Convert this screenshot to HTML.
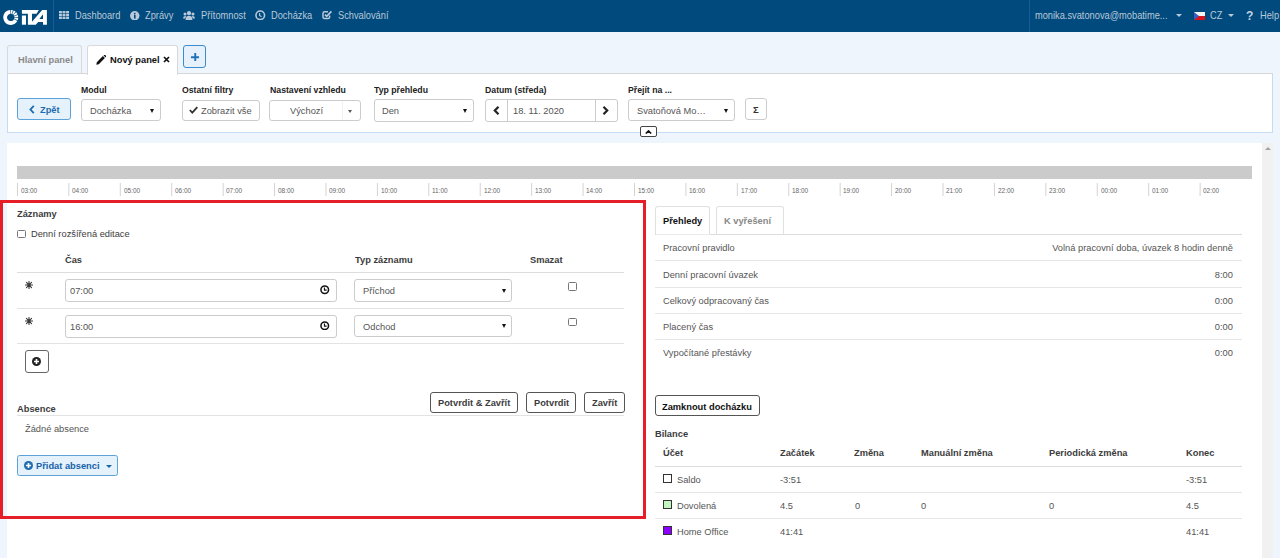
<!DOCTYPE html>
<html><head><meta charset="utf-8">
<style>
*{box-sizing:border-box;margin:0;padding:0}
html,body{width:1280px;height:558px;overflow:hidden;background:#eef5fc;font-family:"Liberation Sans",sans-serif;color:#555}
.a{position:absolute}
.t{position:absolute;line-height:1;white-space:nowrap;transform:scaleX(0.962);transform-origin:0 0}
.r{transform-origin:100% 0}
.b{font-weight:bold}
#nav{position:absolute;left:0;top:0;width:1280px;height:32px;background:#004a7d}
.t.nt{color:#b9c9da;font-size:10.3px;transform:scaleX(.9)}
.box{position:absolute;border:1px solid #ccc;border-radius:3px;background:#fff}
.lbl{color:#222;font-size:9.05px;font-weight:bold}
.ct{font-size:9.67px;color:#555}
.caret{position:absolute;width:0;height:0;border-left:2.5px solid transparent;border-right:2.5px solid transparent;border-top:4px solid #111}
.tick{position:absolute;top:183px;width:1px;height:13px;background:#d0d0d0}
.tl{position:absolute;top:187.1px;transform:scaleX(0.92);transform-origin:0 0;font-size:7px;color:#666;line-height:1}
.hl{position:absolute;height:1px;background:#ddd}
.btn{position:absolute;border:1px solid #555;border-radius:3px;background:#fff}
</style></head><body>

<!-- NAVBAR -->
<div id="nav">
  <svg class="a" style="left:0;top:0" width="60" height="32" viewBox="0 0 60 32"><g fill="#fff">
<path d="M9.84 9.96 A7.5 7.5 0 1 0 17.37 20.92 L14.02 19.14 A3.7 3.7 0 1 1 10.30 13.73Z M12.92 10.22 A7.5 7.5 0 0 0 10.62 9.90 L10.69 13.70 A3.7 3.7 0 0 1 11.82 13.86Z M15.63 11.71 A7.5 7.5 0 0 0 13.66 10.49 L12.18 13.99 A3.7 3.7 0 0 1 13.16 14.59Z M17.51 14.16 A7.5 7.5 0 0 0 16.20 12.25 L13.44 14.86 A3.7 3.7 0 0 1 14.09 15.80Z M18.25 17.16 A7.5 7.5 0 0 0 17.82 14.88 L14.24 16.16 A3.7 3.7 0 0 1 14.45 17.28Z M17.70 20.21 A7.5 7.5 0 0 0 18.23 17.95 L14.44 17.67 A3.7 3.7 0 0 1 14.18 18.79Z"/>
<path fill-rule="evenodd" d="M21.9 10 L38.8 10 L36.6 13.8 L32 13.8 L32 21.7 L42.2 10 L46.9 10 L46.9 24.7 L43 24.7 L43 22 L38.15 22 L35.8 24.7 L27.9 24.7 L27.9 13.8 L21.9 13.8Z M39.4 19 L43 14.15 L43 19Z"/>
<rect x="21.9" y="15.5" width="4.1" height="9.2"/>
</g></svg>
  <div class="a" style="left:53px;top:0;width:1px;height:32px;background:#1c5a9a"></div>
  <!-- grid icon -->
  <svg class="a" style="left:58.9px;top:10.8px" width="10" height="8.4" viewBox="0 0 10 8.4"><g fill="#b9c9da"><rect x="0.00" y="0.00" width="2.9" height="2.4"/><rect x="3.55" y="0.00" width="2.9" height="2.4"/><rect x="7.10" y="0.00" width="2.9" height="2.4"/><rect x="0.00" y="3.00" width="2.9" height="2.4"/><rect x="3.55" y="3.00" width="2.9" height="2.4"/><rect x="7.10" y="3.00" width="2.9" height="2.4"/><rect x="0.00" y="6.00" width="2.9" height="2.4"/><rect x="3.55" y="6.00" width="2.9" height="2.4"/><rect x="7.10" y="6.00" width="2.9" height="2.4"/></g></svg>
  <div class="t nt" style="left:74.5px;top:10.55px">Dashboard</div>
  <svg class="a" style="left:130px;top:10.5px" width="9.5" height="9.5" viewBox="0 0 10 10"><circle cx="5" cy="5" r="5" fill="#b9c9da"/><rect x="4.2" y="4.2" width="1.7" height="3.8" fill="#004a7d"/><circle cx="5" cy="2.7" r="0.95" fill="#004a7d"/></svg>
  <div class="t nt" style="left:145px;top:10.55px">Zprávy</div>
  <svg class="a" style="left:183px;top:11px" width="12" height="9" viewBox="0 0 12 9"><g fill="#b9c9da">
    <circle cx="6" cy="2.2" r="2.1"/><path d="M2.6 9 Q2.6 4.8 6 4.8 Q9.4 4.8 9.4 9Z"/>
    <circle cx="2" cy="3" r="1.5"/><path d="M0 7.5 Q0 5 2 5 Q3 5 3.3 5.6 Q2.3 6.5 2.2 7.5Z"/>
    <circle cx="10" cy="3" r="1.5"/><path d="M12 7.5 Q12 5 10 5 Q9 5 8.7 5.6 Q9.7 6.5 9.8 7.5Z"/>
  </g></svg>
  <div class="t nt" style="left:200.5px;top:10.55px">Přítomnost</div>
  <svg class="a" style="left:255px;top:9.5px" width="10.5" height="10.5" viewBox="0 0 10 10"><circle cx="5" cy="5" r="4.1" fill="none" stroke="#b9c9da" stroke-width="1.5"/><path d="M4.4 2.8 L4.4 5.2 L6.2 6.4" fill="none" stroke="#b9c9da" stroke-width="1.1"/></svg>
  <div class="t nt" style="left:271px;top:10.55px">Docházka</div>
  <svg class="a" style="left:321.5px;top:10px" width="10.5" height="10" viewBox="0 0 10.5 10"><path d="M7.6 5.6 L7.6 7 Q7.6 8.6 6 8.6 L2.6 8.6 Q1 8.6 1 7 L1 3.4 Q1 1.8 2.6 1.8 L6 1.8" fill="none" stroke="#b9c9da" stroke-width="1.5"/><path d="M3 4.6 L4.7 6.3 L9.4 1.4" fill="none" stroke="#b9c9da" stroke-width="1.7"/></svg>
  <div class="t nt" style="left:337.5px;top:10.55px">Schvalování</div>

  <div class="a" style="left:1029px;top:0;width:1px;height:32px;background:#1c5a9a"></div>
  <div class="t nt" style="left:1035px;top:10.55px">monika.svatonova@mobatime...</div>
  <div class="caret" style="left:1175.5px;top:14px;border-left-width:3px;border-right-width:3px;border-top:3.5px solid #b9c9da"></div>
  <svg class="a" style="left:1194px;top:12px" width="11" height="8" viewBox="0 0 11 8"><rect width="11" height="4" fill="#f4f4f4"/><rect y="4" width="11" height="4" fill="#d7141a"/><path d="M0 0 L5 4 L0 8Z" fill="#3b5fc0"/></svg>
  <div class="t nt" style="left:1210px;top:10.55px">CZ</div>
  <div class="caret" style="left:1228px;top:14px;border-left-width:3px;border-right-width:3px;border-top:3.5px solid #b9c9da"></div>
  <div class="t b" style="left:1246px;top:9.5px;font-size:12.5px;color:#c4d2e0">?</div>
  <div class="t nt" style="left:1259.5px;top:10.55px">Help</div>
</div>

<!-- TABS -->
<div class="a" style="left:7px;top:45px;width:75px;height:29px;border:1px solid #d9d9d9;border-bottom:none;border-radius:3px 3px 0 0;background:#eef5fc"></div>
<div class="t b" style="left:18.2px;top:55.2px;font-size:9.67px;color:#8a8a8a">Hlavní panel</div>
<div class="a" style="left:87px;top:45px;width:91px;height:30px;border:1px solid #d9d9d9;border-bottom:none;border-radius:3px 3px 0 0;background:#fff;z-index:2"></div>
<svg class="a" style="left:96px;top:54.5px;z-index:3" width="10" height="10" viewBox="0 0 10 10"><path d="M0.3 9.7 L0.8 7.2 L6.9 1.1 L8.9 3.1 L2.8 9.2Z M7.6 0.4 L8.2 -0.2 Q8.7 -0.5 9.2 0 L10 0.8 Q10.4 1.3 10 1.8 L9.6 2.4Z" fill="#111"/></svg>
<div class="t b" style="left:109.5px;top:55.2px;font-size:9.67px;color:#111;z-index:3">Nový panel</div>
<svg class="a" style="left:163px;top:56px;z-index:3" width="7" height="7" viewBox="0 0 7 7"><path d="M1 1 L6 6 M6 1 L1 6" stroke="#111" stroke-width="1.7"/></svg>
<div class="a" style="left:183px;top:45px;width:23px;height:23px;border:1px solid #3a8bd0;border-radius:3px;background:#e6f1fb"></div>
<svg class="a" style="left:190.5px;top:52.5px" width="8.5" height="8.5" viewBox="0 0 8 8"><path d="M4 0 V8 M0 4 H8" stroke="#1f72b8" stroke-width="1.8"/></svg>

<!-- FILTER PANEL -->
<div class="a" style="left:7px;top:73px;width:1266px;height:60px;border:1px solid #c5dbf1;border-top-color:#d6d6d6;background:#fff;z-index:1"></div>
<div class="a" style="left:88px;top:73px;width:89px;height:2px;background:#fff;z-index:2"></div>
<div id="filters" class="a" style="left:0;top:0;z-index:4">
  <div class="a" style="left:17px;top:98px;width:54px;height:22px;border:1px solid #5aa2d9;border-radius:3px;background:#e5f1fb"></div>
  <svg class="a" style="left:29px;top:104.5px" width="6" height="9" viewBox="0 0 6 9"><path d="M4.8 0.8 L1.4 4.5 L4.8 8.2" fill="none" stroke="#1f6db0" stroke-width="1.8"/></svg>
  <div class="t b" style="left:39.5px;top:104.5px;font-size:9.67px;color:#1f6db0">Zpět</div>

  <div class="t lbl" style="left:81px;top:85.8px">Modul</div>
  <div class="box" style="left:81px;top:99px;width:80px;height:22px"></div>
  <div class="t ct" style="left:89.5px;top:106px">Docházka</div>
  <div class="caret" style="left:150px;top:108.5px"></div>

  <div class="t lbl" style="left:181.5px;top:85.8px">Ostatní filtry</div>
  <div class="box" style="left:181.5px;top:100px;width:78px;height:21px"></div>
  <svg class="a" style="left:189px;top:106px" width="9" height="8" viewBox="0 0 9 8"><path d="M0.8 4 L3.3 6.6 L8.3 1.2" fill="none" stroke="#333" stroke-width="1.8"/></svg>
  <div class="t ct" style="left:201px;top:106px">Zobrazit vše</div>

  <div class="t lbl" style="left:270px;top:85.8px">Nastavení vzhledu</div>
  <div class="box" style="left:269px;top:100px;width:92px;height:21px"></div>
  <div class="a" style="left:341.5px;top:101px;width:1px;height:19px;background:#f2f2f2"></div>
  <div class="t ct" style="left:290px;top:106px">Výchozí</div>
  <div class="caret" style="left:348px;top:110px;border-left-width:2.5px;border-right-width:2.5px;border-top:3px solid #555"></div>

  <div class="t lbl" style="left:374px;top:85.8px">Typ přehledu</div>
  <div class="box" style="left:373.5px;top:99px;width:100px;height:22.5px"></div>
  <div class="t ct" style="left:382.3px;top:106px">Den</div>
  <div class="caret" style="left:462.5px;top:108.5px"></div>

  <div class="t lbl" style="left:484.5px;top:85.8px">Datum (středa)</div>
  <div class="box" style="left:484.5px;top:99px;width:133.5px;height:22.5px"></div>
  <div class="a" style="left:507px;top:100px;width:1px;height:20.5px;background:#ccc"></div>
  <div class="a" style="left:594.5px;top:100px;width:1px;height:20.5px;background:#ccc"></div>
  <svg class="a" style="left:492.5px;top:106px" width="7" height="9" viewBox="0 0 7 9"><path d="M5.5 0.8 L1.8 4.5 L5.5 8.2" fill="none" stroke="#222" stroke-width="2.2"/></svg>
  <svg class="a" style="left:602px;top:106px" width="7" height="9" viewBox="0 0 7 9"><path d="M1.5 0.8 L5.2 4.5 L1.5 8.2" fill="none" stroke="#222" stroke-width="2.2"/></svg>
  <div class="t ct" style="left:512.5px;top:106px">18. 11. 2020</div>

  <div class="t lbl" style="left:628.3px;top:85.8px">Přejít na ...</div>
  <div class="box" style="left:628.3px;top:99.3px;width:106.5px;height:22px"></div>
  <div class="t ct" style="left:636.8px;top:106px">Svatoňová Mo…</div>
  <div class="caret" style="left:723.5px;top:108.5px"></div>

  <div class="box" style="left:745px;top:98.3px;width:21.7px;height:21.3px"></div>
  <div class="t b" style="left:752.5px;top:104.5px;font-size:9.88px;color:#333">Σ</div>

  <div class="a" style="left:640.2px;top:126.2px;width:16.6px;height:10.6px;border:1px solid #444;border-radius:2px;background:#fff"></div>
  <svg class="a" style="left:645px;top:129.5px" width="7" height="4" viewBox="0 0 7 4"><path d="M0.8 3.5 L3.5 0.9 L6.2 3.5" fill="none" stroke="#111" stroke-width="1.6"/></svg>
</div>

<!-- MAIN PANEL -->
<div class="a" style="left:7px;top:143px;width:1266px;height:415px;background:#fff"></div>
<div class="a" style="left:1262px;top:143px;width:11px;height:415px;background:#f1f1f1"></div>
<div class="caret" style="left:1265px;top:146.5px;border-top:none;border-bottom:3.5px solid #a3a3a3;border-left-width:3px;border-right-width:3px"></div>

<div class="a" style="left:17px;top:166px;width:1235px;height:13px;background:#cbcbcb"></div>
<div id="ticks"><svg class="a" style="left:0;top:0" width="1280" height="200"><g stroke="#d3d3d3" stroke-width="1"><line x1="17.45" y1="183" x2="17.45" y2="196"/><line x1="68.87" y1="183" x2="68.87" y2="196"/><line x1="120.29" y1="183" x2="120.29" y2="196"/><line x1="171.71" y1="183" x2="171.71" y2="196"/><line x1="223.13" y1="183" x2="223.13" y2="196"/><line x1="274.55" y1="183" x2="274.55" y2="196"/><line x1="325.97" y1="183" x2="325.97" y2="196"/><line x1="377.39" y1="183" x2="377.39" y2="196"/><line x1="428.81" y1="183" x2="428.81" y2="196"/><line x1="480.23" y1="183" x2="480.23" y2="196"/><line x1="531.65" y1="183" x2="531.65" y2="196"/><line x1="583.07" y1="183" x2="583.07" y2="196"/><line x1="634.49" y1="183" x2="634.49" y2="196"/><line x1="685.91" y1="183" x2="685.91" y2="196"/><line x1="737.33" y1="183" x2="737.33" y2="196"/><line x1="788.75" y1="183" x2="788.75" y2="196"/><line x1="840.17" y1="183" x2="840.17" y2="196"/><line x1="891.59" y1="183" x2="891.59" y2="196"/><line x1="943.01" y1="183" x2="943.01" y2="196"/><line x1="994.43" y1="183" x2="994.43" y2="196"/><line x1="1045.85" y1="183" x2="1045.85" y2="196"/><line x1="1097.27" y1="183" x2="1097.27" y2="196"/><line x1="1148.69" y1="183" x2="1148.69" y2="196"/><line x1="1200.11" y1="183" x2="1200.11" y2="196"/></g></svg><div class="tl" style="left:20.75px">03:00</div><div class="tl" style="left:72.17px">04:00</div><div class="tl" style="left:123.59px">05:00</div><div class="tl" style="left:175.01px">06:00</div><div class="tl" style="left:226.43px">07:00</div><div class="tl" style="left:277.85px">08:00</div><div class="tl" style="left:329.27px">09:00</div><div class="tl" style="left:380.69px">10:00</div><div class="tl" style="left:432.11px">11:00</div><div class="tl" style="left:483.53px">12:00</div><div class="tl" style="left:534.95px">13:00</div><div class="tl" style="left:586.37px">14:00</div><div class="tl" style="left:637.79px">15:00</div><div class="tl" style="left:689.21px">16:00</div><div class="tl" style="left:740.63px">17:00</div><div class="tl" style="left:792.05px">18:00</div><div class="tl" style="left:843.47px">19:00</div><div class="tl" style="left:894.89px">20:00</div><div class="tl" style="left:946.31px">21:00</div><div class="tl" style="left:997.73px">22:00</div><div class="tl" style="left:1049.15px">23:00</div><div class="tl" style="left:1100.57px">00:00</div><div class="tl" style="left:1151.99px">01:00</div><div class="tl" style="left:1203.41px">02:00</div></div>

<!-- RED BOX -->
<div class="a" style="left:0;top:200px;width:646px;height:319px;border:3px solid #e61e28"></div>

<div id="left"><div class="t b" style="left:17px;top:208.5px;font-size:9.67px;color:#3c3c3c">Záznamy</div>
<div class="a" style="left:17px;top:229.5px;width:9px;height:8.5px;border:1px solid #777;border-radius:1.5px;background:#fff"></div>
<div class="t" style="left:30.7px;top:228.5px;font-size:9.67px;color:#3c3c3c">Denní rozšířená editace</div>

<div class="t b" style="left:65.2px;top:254.5px;font-size:9.67px;color:#3c3c3c">Čas</div>
<div class="t b" style="left:355px;top:254.5px;font-size:9.67px;color:#3c3c3c">Typ záznamu</div>
<div class="t b" style="left:529.8px;top:254.5px;font-size:9.67px;color:#3c3c3c">Smazat</div>
<div class="hl" style="left:16.5px;top:271.5px;width:607.5px;height:1.5px;background:#ddd"></div>

<svg class="a" style="left:25.3px;top:281.3px" width="8" height="8" viewBox="0 0 8 8"><g stroke="#3a3a3a" stroke-width="1.1" stroke-linecap="round"><path d="M4 0.4 V7.6 M0.4 4 H7.6 M1.45 1.45 L6.55 6.55 M6.55 1.45 L1.45 6.55"/></g><circle cx="4" cy="4" r="1.4" fill="#3a3a3a"/></svg>
<div class="box" style="left:65.3px;top:279.4px;width:272px;height:22.3px"></div>
<div class="t ct" style="left:69.8px;top:286px">07:00</div>
<svg class="a" style="left:320.2px;top:285.3px" width="9.5" height="9.5" viewBox="0 0 10 10"><circle cx="5" cy="5" r="4" fill="none" stroke="#111" stroke-width="1.6"/><path d="M4.7 2.6 V5.4 H7" fill="none" stroke="#111" stroke-width="1.2"/></svg>
<div class="box" style="left:354.3px;top:279.4px;width:158px;height:22.2px"></div>
<div class="t ct" style="left:362.7px;top:286px">Příchod</div>
<div class="caret" style="left:501.8px;top:288.5px;border-left-width:2px;border-right-width:2px;border-top-width:4px"></div>
<div class="a" style="left:568.2px;top:282.3px;width:8.6px;height:8.6px;border:1px solid #777;border-radius:1.5px;background:#fff"></div>
<div class="hl" style="left:16.5px;top:308px;width:607.5px;background:#e3e3e3"></div>

<svg class="a" style="left:25.3px;top:316.8px" width="8" height="8" viewBox="0 0 8 8"><g stroke="#3a3a3a" stroke-width="1.1" stroke-linecap="round"><path d="M4 0.4 V7.6 M0.4 4 H7.6 M1.45 1.45 L6.55 6.55 M6.55 1.45 L1.45 6.55"/></g><circle cx="4" cy="4" r="1.4" fill="#3a3a3a"/></svg>
<div class="box" style="left:65.3px;top:315.1px;width:272px;height:22.5px"></div>
<div class="t ct" style="left:69.8px;top:321.5px">16:00</div>
<svg class="a" style="left:320.2px;top:320.8px" width="9.5" height="9.5" viewBox="0 0 10 10"><circle cx="5" cy="5" r="4" fill="none" stroke="#111" stroke-width="1.6"/><path d="M4.7 2.6 V5.4 H7" fill="none" stroke="#111" stroke-width="1.2"/></svg>
<div class="box" style="left:354.3px;top:315.3px;width:158px;height:22px"></div>
<div class="t ct" style="left:362.7px;top:321.5px">Odchod</div>
<div class="caret" style="left:501.8px;top:323.8px;border-left-width:2px;border-right-width:2px;border-top-width:4px"></div>
<div class="a" style="left:568.2px;top:317.6px;width:8.6px;height:8.6px;border:1px solid #777;border-radius:1.5px;background:#fff"></div>
<div class="hl" style="left:16.5px;top:343.3px;width:607.5px;background:#e3e3e3"></div>

<div class="btn" style="left:24.8px;top:350px;width:24px;height:22.6px;border-color:#666"></div>
<svg class="a" style="left:32.3px;top:357px" width="9" height="9" viewBox="0 0 10 10"><circle cx="5" cy="5" r="5" fill="#222"/><path d="M5 2.2 V7.8 M2.2 5 H7.8" stroke="#fff" stroke-width="1.8"/></svg>

<div class="btn" style="left:430.2px;top:392.2px;width:87.4px;height:21.2px"></div>
<div class="t b" style="left:438px;top:398px;font-size:9.67px;color:#3c3c3c">Potvrdit &amp; Zavřít</div>
<div class="btn" style="left:526px;top:392.2px;width:50px;height:21.2px"></div>
<div class="t b" style="left:533.6px;top:398px;font-size:9.67px;color:#3c3c3c">Potvrdit</div>
<div class="btn" style="left:583.9px;top:392.2px;width:41px;height:21.2px"></div>
<div class="t b" style="left:591.6px;top:398px;font-size:9.67px;color:#3c3c3c">Zavřít</div>

<div class="t b" style="left:17px;top:404.3px;font-size:9.67px;color:#3c3c3c">Absence</div>
<div class="hl" style="left:17px;top:415px;width:607px;background:#e3e3e3"></div>
<div class="t" style="left:24.6px;top:424.3px;font-size:9.67px;color:#555">Žádné absence</div>

<div class="a" style="left:17px;top:455.2px;width:101px;height:20.6px;border:1px solid #5aa2d9;border-radius:2.5px;background:#e5f1fb"></div>
<svg class="a" style="left:24.3px;top:461px" width="9" height="9" viewBox="0 0 10 10"><circle cx="5" cy="5" r="5" fill="#1f6db0"/><path d="M5 2.2 V7.8 M2.2 5 H7.8" stroke="#fff" stroke-width="1.8"/></svg>
<div class="t b" style="left:36.4px;top:461px;font-size:9.67px;color:#1763aa">Přidat absenci</div>
<div class="caret" style="left:105.5px;top:464.5px;border-left-width:3px;border-right-width:3px;border-top:3.2px solid #1763aa"></div>
</div>
<div id="right"><div class="a" style="left:655.3px;top:206.3px;width:55.1px;height:28px;border:1px solid #e0e0e0;border-bottom:none;border-radius:3px 3px 0 0;background:#fff;z-index:2"></div>
<div class="a" style="left:716.2px;top:206.3px;width:67.5px;height:28px;border:1px solid #e0e0e0;border-bottom:none;border-radius:3px 3px 0 0;background:#fff"></div>
<div class="hl" style="left:655.3px;top:234px;width:586.6px;height:1px;background:#dcdcdc;z-index:4"></div><div class="hl" style="left:656px;top:234px;width:54px;height:1px;background:#ececec;z-index:4"></div>
<div class="t b" style="left:662.9px;top:216.2px;font-size:9.67px;color:#111;z-index:3">Přehledy</div>
<div class="t b" style="left:724px;top:216.2px;font-size:9.67px;color:#888">K vyřešení</div>

<div class="t" style="left:662.9px;top:243.3px;font-size:9.67px;color:#555">Pracovní pravidlo</div>
<div class="t r" style="right:47.2px;top:243.3px;font-size:9.67px;color:#555">Volná pracovní doba, úvazek 8 hodin denně</div>
<div class="hl" style="left:655.3px;top:260.3px;width:586.6px;background:#e6e6e6"></div>
<div class="t" style="left:662.9px;top:269.6px;font-size:9.67px;color:#555">Denní pracovní úvazek</div>
<div class="t r" style="right:47.2px;top:269.6px;font-size:9.67px;color:#555">8:00</div>
<div class="hl" style="left:655.3px;top:286.7px;width:586.6px;background:#e6e6e6"></div>
<div class="t" style="left:662.9px;top:295.8px;font-size:9.67px;color:#555">Celkový odpracovaný čas</div>
<div class="t r" style="right:47.2px;top:295.8px;font-size:9.67px;color:#555">0:00</div>
<div class="hl" style="left:655.3px;top:313px;width:586.6px;background:#e6e6e6"></div>
<div class="t" style="left:662.9px;top:322px;font-size:9.67px;color:#555">Placený čas</div>
<div class="t r" style="right:47.2px;top:322px;font-size:9.67px;color:#555">0:00</div>
<div class="hl" style="left:655.3px;top:339.2px;width:586.6px;background:#e6e6e6"></div>
<div class="t" style="left:662.9px;top:348.2px;font-size:9.67px;color:#555">Vypočítané přestávky</div>
<div class="t r" style="right:47.2px;top:348.2px;font-size:9.67px;color:#555">0:00</div>

<div class="btn" style="left:654.9px;top:395.1px;width:104.7px;height:21.4px"></div>
<div class="t b" style="left:661.5px;top:401.5px;font-size:9.67px;color:#111">Zamknout docházku</div>

<div class="t b" style="left:654.9px;top:428.8px;font-size:9.67px;color:#3c3c3c">Bilance</div>
<div class="t b" style="left:662.5px;top:448.4px;font-size:9.67px;color:#3c3c3c">Účet</div>
<div class="t b" style="left:780.4px;top:448.4px;font-size:9.67px;color:#3c3c3c">Začátek</div>
<div class="t b" style="left:854.1px;top:448.4px;font-size:9.67px;color:#3c3c3c">Změna</div>
<div class="t b" style="left:921.2px;top:448.4px;font-size:9.67px;color:#3c3c3c">Manuální změna</div>
<div class="t b" style="left:1048.7px;top:448.4px;font-size:9.67px;color:#3c3c3c">Periodická změna</div>
<div class="t b" style="left:1185.6px;top:448.4px;font-size:9.67px;color:#3c3c3c">Konec</div>
<div class="hl" style="left:655.3px;top:465.5px;width:586.6px;height:1.5px;background:#ddd"></div>

<div class="a" style="left:663px;top:473.6px;width:9.2px;height:9.2px;border:1px solid #333;background:#fff"></div>
<div class="t" style="left:677.2px;top:474.8px;font-size:9.67px;color:#555">Saldo</div>
<div class="t" style="left:780.4px;top:474.8px;font-size:9.67px;color:#555">-3:51</div>
<div class="t" style="left:1185.6px;top:474.8px;font-size:9.67px;color:#555">-3:51</div>
<div class="hl" style="left:655.3px;top:492px;width:586.6px;background:#e6e6e6"></div>

<div class="a" style="left:663px;top:499.8px;width:9.2px;height:9.2px;border:1px solid #333;background:#c3f5c3"></div>
<div class="t" style="left:677.2px;top:501px;font-size:9.67px;color:#555">Dovolená</div>
<div class="t" style="left:780.4px;top:501px;font-size:9.67px;color:#555">4.5</div>
<div class="t" style="left:854.7px;top:501px;font-size:9.67px;color:#555">0</div>
<div class="t" style="left:921.2px;top:501px;font-size:9.67px;color:#555">0</div>
<div class="t" style="left:1048.7px;top:501px;font-size:9.67px;color:#555">0</div>
<div class="t" style="left:1185.6px;top:501px;font-size:9.67px;color:#555">4.5</div>
<div class="hl" style="left:655.3px;top:518.2px;width:586.6px;background:#e6e6e6"></div>

<div class="a" style="left:663px;top:526px;width:9.2px;height:9.2px;border:1px solid #333;background:#8c00ff"></div>
<div class="t" style="left:677.2px;top:527.2px;font-size:9.67px;color:#555">Home Office</div>
<div class="t" style="left:780.4px;top:527.2px;font-size:9.67px;color:#555">41:41</div>
<div class="t" style="left:1185.6px;top:527.2px;font-size:9.67px;color:#555">41:41</div>
</div>

</body></html>
